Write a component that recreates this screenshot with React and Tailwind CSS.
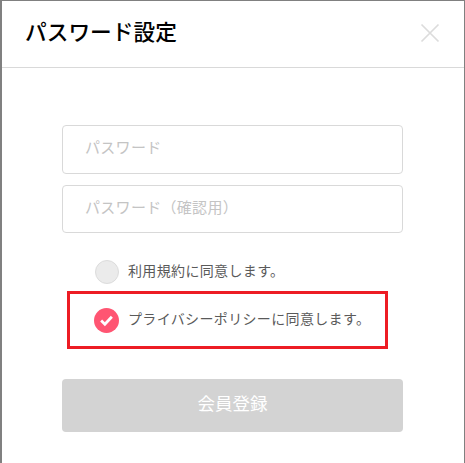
import React from "react";

const font = { fontFamily: '"Noto Sans CJK JP", "Noto Sans", sans-serif' };

export default function App() {
  return (
    <div style={font} className="w-[465px] h-[463px] overflow-hidden bg-[#808080] pt-px pl-[2px] pr-px">
      <div className="h-[462px] bg-white flex flex-col">
        <header className="h-[66px] shrink-0 border-b border-[#d9d9d9] box-content flex items-center justify-between pl-[23px] pr-[24px] pb-0">
          <h1 className="text-[21.7px] font-medium leading-none text-black pb-[7px]">パスワード設定</h1>
          <button aria-label="閉じる" className="w-[20px] h-[20px] flex items-center justify-center mb-[2px]">
            <svg width="20" height="20" viewBox="0 0 20 20" fill="none" stroke="#dcdcdc" strokeWidth="1.7">
              <path d="M1.5 1.5 L18.5 18.5 M18.5 1.5 L1.5 18.5" />
            </svg>
          </button>
        </header>

        <main className="flex flex-col pt-[57px] pl-[60px] pr-[60px]">
          <div className="w-[341px] h-[49px] border border-[#d9d9d9] rounded-[4px] flex items-center pl-[22px] pb-[4px] text-[15px] tracking-[0.3px] text-[#c4c4c4]">パスワード</div>
          <div className="w-[341px] h-[48px] mt-[11px] border border-[#d9d9d9] rounded-[4px] flex items-center pl-[22px] pb-[3px] text-[15px] tracking-[0.3px] text-[#c4c4c4]">パスワード（確認用）</div>

          <div className="flex items-center gap-[9px] mt-[27px] ml-[33px] h-[24px]">
            <span className="w-[24px] h-[24px] shrink-0 rounded-full bg-[#ebebeb] border border-[#dcdcdc]" />
            <span className="text-[14px] tracking-[0.35px] text-[#5a5a5a] leading-none pb-[4px]">利用規約に同意します。</span>
          </div>

          <div className="w-[321px] h-[58px] mt-[7px] ml-[5px] border-[3px] border-[#ed1c24] flex items-center pl-[24px] gap-[9px]">
            <span className="w-[25px] h-[25px] shrink-0 rounded-full bg-[#ff5572] flex items-center justify-center">
              <svg width="15" height="13" viewBox="0 0 14 12" fill="none" stroke="#fff" strokeWidth="2.6">
                <path d="M2 6 L5.5 9.5 L12 2.5" />
              </svg>
            </span>
            <span className="text-[14px] tracking-[0.35px] text-[#5a5a5a] leading-none pb-[4px]">プライバシーポリシーに同意します。</span>
          </div>

          <button className="w-[341px] h-[53px] mt-[30px] rounded-[4px] bg-[#d3d3d3] text-white text-[17.5px] pb-[4px] flex items-center justify-center">会員登録</button>
        </main>
      </div>
    </div>
  );
}
